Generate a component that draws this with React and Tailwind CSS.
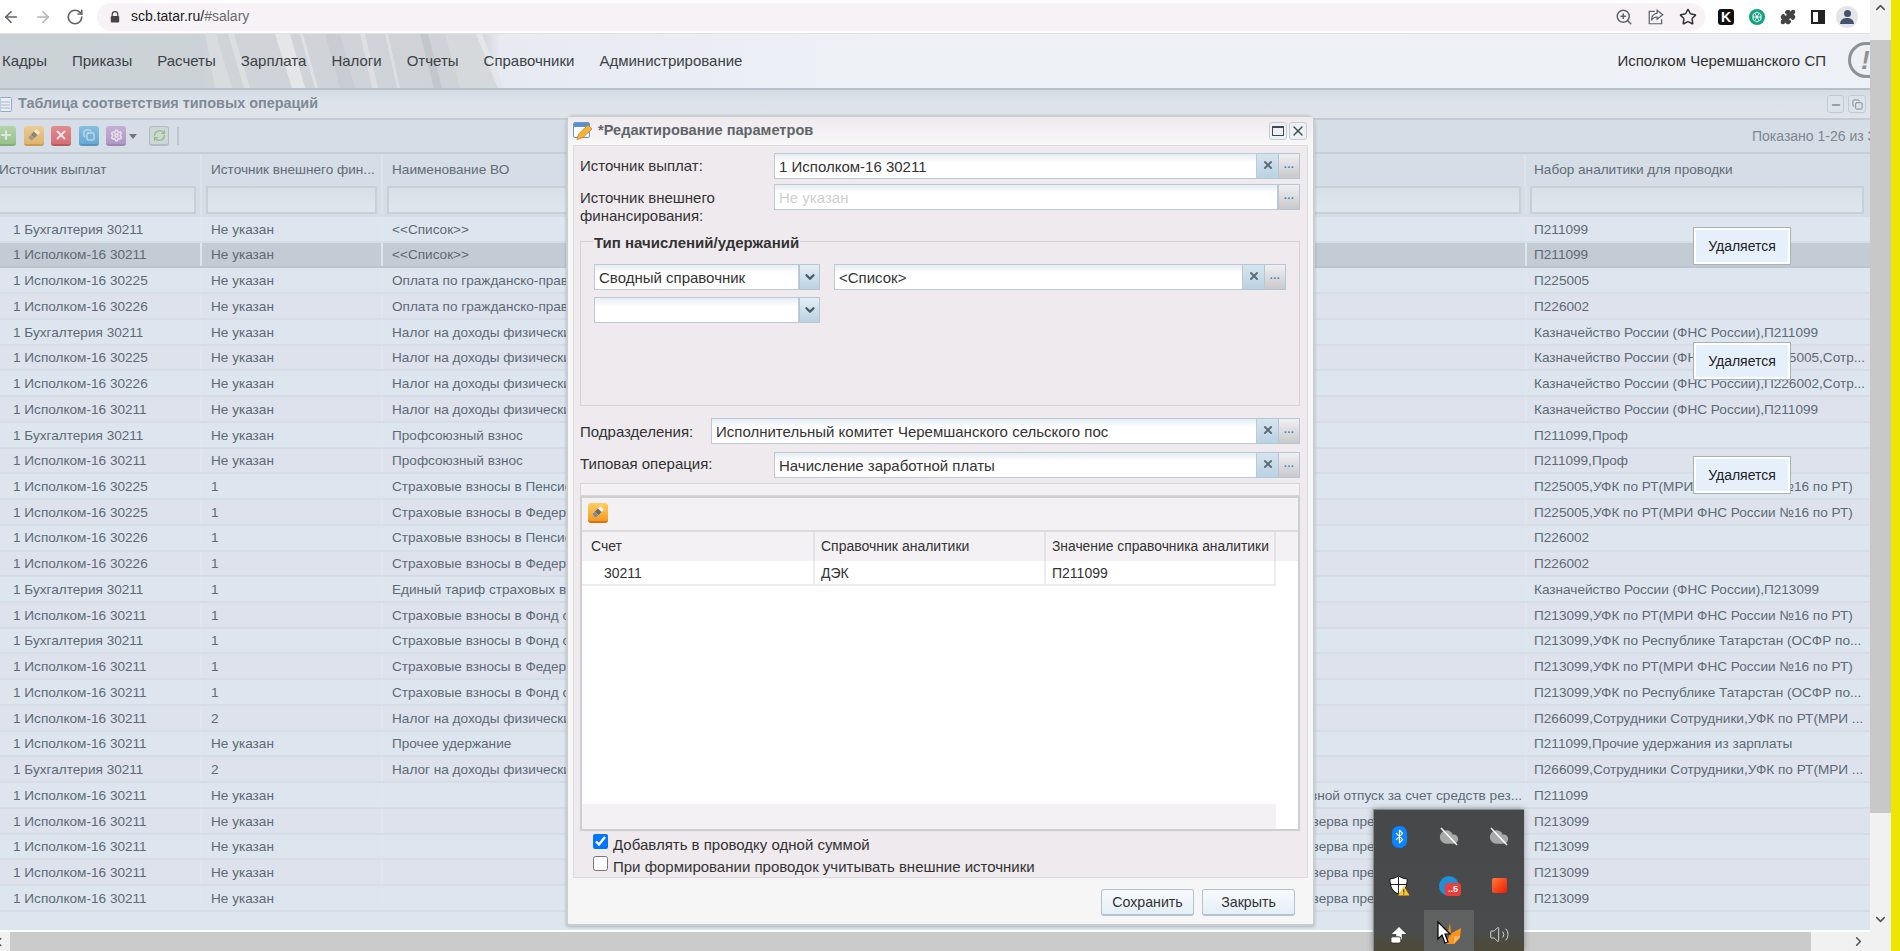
import React from "react";
import { ArrowLeft, ArrowRight, RotateCw, ZoomIn, Star, Puzzle, Plus, X, Copy, Settings, RefreshCw, Bluetooth, Cloud, Volume2, ChevronUp, ChevronDown, ChevronLeft, ChevronRight, Minus } from "lucide-react";

const ROWS = [
  ["1 Бухгалтерия 30211", "Не указан", "<<Список>>", "", "П211099"],
  ["1 Исполком-16 30211", "Не указан", "<<Список>>", "", "П211099"],
  ["1 Исполком-16 30225", "Не указан", "Оплата по гражданско-правовым договорам", "", "П225005"],
  ["1 Исполком-16 30226", "Не указан", "Оплата по гражданско-правовым договорам", "", "П226002"],
  ["1 Бухгалтерия 30211", "Не указан", "Налог на доходы физических лиц", "", "Казначейство России (ФНС России),П211099"],
  ["1 Исполком-16 30225", "Не указан", "Налог на доходы физических лиц", "", "Казначейство России (ФНС России),П225005,Сотр..."],
  ["1 Исполком-16 30226", "Не указан", "Налог на доходы физических лиц", "", "Казначейство России (ФНС России),П226002,Сотр..."],
  ["1 Исполком-16 30211", "Не указан", "Налог на доходы физических лиц", "", "Казначейство России (ФНС России),П211099"],
  ["1 Бухгалтерия 30211", "Не указан", "Профсоюзный взнос", "", "П211099,Проф"],
  ["1 Исполком-16 30211", "Не указан", "Профсоюзный взнос", "", "П211099,Проф"],
  ["1 Исполком-16 30225", "1", "Страховые взносы в Пенсионный фонд", "", "П225005,УФК по РТ(МРИ ФНС России №16 по РТ)"],
  ["1 Исполком-16 30225", "1", "Страховые взносы в Федеральный фонд", "", "П225005,УФК по РТ(МРИ ФНС России №16 по РТ)"],
  ["1 Исполком-16 30226", "1", "Страховые взносы в Пенсионный фонд", "", "П226002"],
  ["1 Исполком-16 30226", "1", "Страховые взносы в Федеральный фонд", "", "П226002"],
  ["1 Бухгалтерия 30211", "1", "Единый тариф страховых взносов", "", "Казначейство России (ФНС России),П213099"],
  ["1 Исполком-16 30211", "1", "Страховые взносы в Фонд социального", "", "П213099,УФК по РТ(МРИ ФНС России №16 по РТ)"],
  ["1 Бухгалтерия 30211", "1", "Страховые взносы в Фонд социального", "", "П213099,УФК по Республике Татарстан (ОСФР по..."],
  ["1 Исполком-16 30211", "1", "Страховые взносы в Федеральный фонд", "", "П213099,УФК по РТ(МРИ ФНС России №16 по РТ)"],
  ["1 Исполком-16 30211", "1", "Страховые взносы в Фонд социального", "", "П213099,УФК по Республике Татарстан (ОСФР по..."],
  ["1 Исполком-16 30211", "2", "Налог на доходы физических лиц", "", "П266099,Сотрудники Сотрудники,УФК по РТ(МРИ ..."],
  ["1 Исполком-16 30211", "Не указан", "Прочее удержание", "", "П211099,Прочие удержания из зарплаты"],
  ["1 Бухгалтерия 30211", "2", "Налог на доходы физических лиц", "", "П266099,Сотрудники Сотрудники,УФК по РТ(МРИ ..."],
  ["1 Исполком-16 30211", "Не указан", "", "Ежегодный основной отпуск за счет средств рез...", "П211099"],
  ["1 Исполком-16 30211", "Не указан", "", "Отпуск за счет резерва предстоящих расходов", "П213099"],
  ["1 Исполком-16 30211", "Не указан", "", "Отпуск за счет резерва предстоящих расходов", "П213099"],
  ["1 Исполком-16 30211", "Не указан", "", "Отпуск за счет резерва предстоящих расходов", "П213099"],
  ["1 Исполком-16 30211", "Не указан", "", "Отпуск за счет резерва предстоящих расходов", "П213099"],
];

function Eraser({ className }) {
  return (
    <svg viewBox="0 0 16 16" className={className}>
      <g transform="rotate(45 8 8)">
        <rect x="5.4" y="2" width="5.2" height="12" rx="1" fill="#fff" fillOpacity="0.85" />
        <rect x="5.4" y="5.5" width="5.2" height="4.5" fill="#6b6b6b" />
        <rect x="5.4" y="10" width="5.2" height="4" rx="1" fill="#8a8a8a" />
      </g>
    </svg>
  );
}

function ToolBtn({ className, children }) {
  return <div className={`w-5 h-5 shrink-0 rounded-[3px] flex items-center justify-center border-b-2 ${className}`}>{children}</div>;
}

function Field({ value, placeholder, clear = true, className = "" }) {
  return (
    <div className={`flex h-[26px] ${className}`}>
      <div className="flex-1 min-w-0 border border-[#bfc9d4] bg-[linear-gradient(#e6edf4,#ffffff_35%)] pl-1 pt-[3px] flex items-center overflow-hidden whitespace-nowrap">
        {placeholder ? <span className="text-[#cfcfcf]">{placeholder}</span> : <span>{value}</span>}
      </div>
      {clear && (
        <div className="w-[21px] shrink-0 border-y border-[#b7c6d4] bg-[linear-gradient(#d6e5ef,#b9d2e2)] flex justify-center pt-[5px]">
          <X size={12} strokeWidth={4} className="text-[#5f6d78]" />
        </div>
      )}
      <Dots />
    </div>
  );
}

function Dots() {
  return (
    <div className="w-[22px] shrink-0 border border-[#b7c6d4] bg-[linear-gradient(#f0f0f2,#c9c9cb)] flex justify-center pt-[3px] text-[#3f83c5] text-[11px] font-bold leading-[14px] tracking-[0.5px]">
      ...
    </div>
  );
}

function Select({ value, className = "" }) {
  return (
    <div className={`flex w-[226px] h-[26px] ${className}`}>
      <div className="flex-1 border border-[#bfc9d4] bg-[linear-gradient(#e6edf4,#ffffff_35%)] pl-1 pt-[3px] flex items-center whitespace-nowrap overflow-hidden">{value}</div>
      <div className="w-[21px] shrink-0 border border-[#b7c6d4] bg-[linear-gradient(#e4eef4,#b9d2e2)] flex justify-center pt-[5px]">
        <ChevronDown size={14} strokeWidth={4} className="text-[#4a5a68]" />
      </div>
    </div>
  );
}

function Button({ children }) {
  return (
    <div className="w-[93px] h-[27px] rounded-[3px] border border-[#b4c3d0] border-b-2 bg-[linear-gradient(#f8fbfd,#e4eff7)] pt-[1px] flex items-center justify-center text-[14.2px] text-[#333]">
      {children}
    </div>
  );
}

function Dialog() {
  return (
    <div className="absolute left-[566px] top-[115px] w-[749px] h-[811px] flex flex-col rounded-t-lg rounded-b-[3px] border-2 border-[#c9ced3] bg-[#f6f6f6] px-[5px] text-[15px] text-[#333] shadow-[0_1px_3px_rgba(0,0,0,0.2)]">
      <div className="h-7 shrink-0 flex items-center bg-[linear-gradient(#eeeaee,#f8f8f8)] -mx-[5px] pl-[5px] pr-[6px]">
        <svg viewBox="0 0 20 18" className="w-5 h-[18px] shrink-0">
          <rect x="0.5" y="0.5" width="16" height="15" rx="1.5" fill="#fff" stroke="#6d97c9" />
          <rect x="1" y="1" width="15" height="4" fill="#5d8fd0" />
          <path d="M4 17.5 L5.5 12 L15 3 L19 7 L10 15.5 Z" fill="#f3b43a" stroke="#b97a18" strokeWidth="0.7" />
        </svg>
        <span className="ml-[5px] font-bold text-[#5f6469] text-[14.6px] whitespace-nowrap">*Редактирование параметров</span>
        <div className="ml-auto flex gap-[2px]">
          <div className="w-[18px] h-[18px] rounded-[3px] border border-[#c5ccd2] bg-[#eef1f3] flex items-center justify-center">
            <div className="w-3 h-[10px] border border-[#3f4a55] border-t-2" />
          </div>
          <div className="w-[18px] h-[18px] rounded-[3px] border border-[#c5ccd2] bg-[#eef1f3] flex items-center justify-center">
            <X size={16} strokeWidth={2} className="text-[#3f4a55]" />
          </div>
        </div>
      </div>

      <div className="h-[733px] shrink-0 bg-[#eeeaee] border border-[#dcdcdc] pl-[6px] pr-[7px] flex flex-col">
        <div className="mt-[7px] flex">
          <div className="w-[194px] shrink-0 h-[25px] leading-[25px]">Источник выплат:</div>
          <Field value="1 Исполком-16 30211" className="flex-1" />
        </div>
        <div className="mt-[5px] flex">
          <div className="w-[194px] shrink-0 leading-[18px] pt-[5px]">Источник внешнего финансирования:</div>
          <Field placeholder="Не указан" clear={false} className="flex-1" />
        </div>
        <div className="relative mt-[16px] h-[165px] shrink-0 border border-[#d6d4d8] pl-[13px] pt-[22px]">
          <span className="absolute left-[12px] -top-[8px] bg-[#eeeaee] px-[1px] leading-[17px] font-bold text-[#333] whitespace-nowrap">Тип начислений/удержаний</span>
          <div className="flex">
            <Select value="Сводный справочник" />
            <Field value="<Список>" className="ml-[14px] w-[452px]" />
          </div>
          <Select value="" className="mt-[7px]" />
        </div>
        <div className="mt-3 flex">
          <div className="w-[131px] shrink-0 h-[26px] leading-[28px]">Подразделения:</div>
          <Field value="Исполнительный комитет Черемшанского сельского пос" className="flex-1" />
        </div>
        <div className="mt-2 flex">
          <div className="w-[194px] shrink-0 h-[26px] leading-[24px]">Типовая операция:</div>
          <Field value="Начисление заработной платы" className="flex-1" />
        </div>
        <div className="mt-[5px] h-[13px] shrink-0 border border-[#d8d8da] bg-[#f4f1f5]" />
        <div className="h-[335px] shrink-0 border-2 border-[#cfcfd1] bg-white flex flex-col text-[14px]">
          <div className="h-[34px] shrink-0 bg-[#f4f1f5] border-b-2 border-[#dcdcde] pl-[6px] pt-[5px]">
            <ToolBtn className="bg-[linear-gradient(#ffcf63,#f59b1f)] border-[#d9730f]">
              <Eraser className="w-4 h-4" />
            </ToolBtn>
          </div>
          <div className="flex h-[29px] shrink-0 items-center bg-[#f4f1f5]">
            <div className="w-[232px] h-full flex items-center pl-2 border-r-2 border-[#e4e2e6] ml-[1px]">Счет</div>
            <div className="w-[231px] h-full flex items-center pl-[6px] border-r-2 border-[#e4e2e6]">Справочник аналитики</div>
            <div className="w-[230px] h-full flex items-center pl-[6px] border-r-2 border-[#e4e2e6] whitespace-nowrap text-[13.85px]">Значение справочника аналитики</div>
          </div>
          <div className="flex h-[25px] shrink-0 w-[694px] border-b-2 border-r-2 border-[#ececee] items-center">
            <div className="w-[232px] h-full flex items-center pl-[21px] pt-[2px] border-r-2 border-[#ececee] ml-[1px]">30211</div>
            <div className="w-[231px] h-full flex items-center pl-[6px] pt-[2px] border-r-2 border-[#ececee]">ДЭК</div>
            <div className="flex-1 h-full flex items-center pl-[6px] pt-[2px]">П211099</div>
          </div>
          <div className="flex-1" />
          <div className="w-[694px] h-[25px] shrink-0 bg-[#f4f1f5]" />
        </div>
        <div className="flex items-start pl-[13px] mt-[3px] h-[23px]">
          <input type="checkbox" defaultChecked className="w-[15px] h-[15px] accent-[#0075ff] m-0" />
          <span className="ml-[5px] leading-[20px] mt-[1px]">Добавлять в проводку одной суммой</span>
        </div>
        <div className="flex items-start pl-[13px] h-[21px]">
          <input type="checkbox" className="w-[15px] h-[15px] m-0" />
          <span className="ml-[5px] leading-[20px] mt-[1px]">При формировании проводок учитывать внешние источники</span>
        </div>
      </div>

      <div className="flex justify-end gap-[8px] pr-[13px] pt-[11px]">
        <Button>Сохранить</Button>
        <Button>Закрыть</Button>
      </div>
    </div>
  );
}

function Tip({ className }) {
  return (
    <div className={`absolute left-[1693px] w-[98px] h-[38px] border border-[#a9b1b8] bg-[#e6f0fb] outline-2 -outline-offset-3 outline-white flex items-center justify-center text-[14px] text-[#222] ${className}`}>
      Удаляется
    </div>
  );
}

function CloudOff() {
  return (
    <div className="relative w-5 h-5 flex items-center justify-center">
      <Cloud size={20} className="text-[#a9a9a9] fill-[#a9a9a9]" />
      <svg viewBox="0 0 20 20" className="absolute inset-0 w-5 h-5">
        <path d="M2 1 L18 18" stroke="#fff" strokeWidth="1.5" />
      </svg>
    </div>
  );
}

function Tray() {
  return (
    <div className="absolute left-[1373px] top-[809px] w-[151px] h-[142px] border-t border-l border-[#8a8a8a] bg-[linear-gradient(#464849,#4a4b4c_85%,#4d4a38)] shadow-[0_0_6px_rgba(0,0,0,0.35)] grid grid-cols-3 grid-rows-[51px_49px_1fr]">
      <div className="flex items-center justify-center pt-[2px]">
        <div className="w-[15px] h-[22px] rounded-[7px] bg-[#0a84ff] flex items-center justify-center">
          <Bluetooth size={15} strokeWidth={2} className="text-white" />
        </div>
      </div>
      <div className="flex items-center justify-center pt-[2px]"><CloudOff /></div>
      <div className="flex items-center justify-center pt-[2px]"><CloudOff /></div>

      <div className="flex items-center justify-center">
        <svg viewBox="0 0 22 22" className="w-[21px] h-[21px]">
          <path d="M10 1 C7 3 4 4 1 4 C1 12 3 17 10 20 C17 17 19 12 19 4 C16 4 13 3 10 1 Z" fill="#fff" stroke="#111" strokeWidth="1" />
          <path d="M10 1.5 V19.5 M1.5 10 H18.5" stroke="#111" strokeWidth="1" />
          <path d="M15.5 11.5 L21.5 21.5 H9.5 Z" fill="#fdc42b" />
          <path d="M15.5 15 V18.5 M15.5 19.5 V20.5" stroke="#222" strokeWidth="1" />
        </svg>
      </div>
      <div className="flex items-center justify-center">
        <div className="relative w-5 h-5 rounded-full bg-[#1d90d6]">
          <span className="absolute left-[6px] top-[7px] w-[16px] h-[13px] rounded-[3px] bg-[#ee3b3b] text-white text-[9px] leading-[13px] text-center font-bold">..5</span>
        </div>
      </div>
      <div className="flex items-center justify-center">
        <div className="w-[15px] h-[15px] rounded-[2px] bg-[linear-gradient(135deg,#ff7a3a,#f01a00)]" />
      </div>

      <div className="flex items-center justify-center pt-[8px]">
        <svg viewBox="0 0 20 20" className="w-[18px] h-[18px]">
          <path d="M10 1 L18 9 H13 V15 H7 V9 H2 Z" fill="#fff" />
          <rect x="1" y="12" width="11" height="7" rx="2" fill="#fff" stroke="#333" strokeWidth="1" />
        </svg>
      </div>
      <div className="bg-[#5f6060] flex items-center justify-center pt-[4px]">
        <svg viewBox="0 0 26 26" className="w-[26px] h-[26px]">
          <path d="M14 3 L15 13 L12 12 Z" fill="#f7941d" />
          <path d="M25 8 L24 18 L18 24 L10 24 L14 14 Z" fill="#f7941d" />
          <path d="M18 16 L24 16 L18 24 Z" fill="#fbb45c" />
          <path d="M2 2 L2 19 L6 15 L9 23 L12 22 L9 14 L14 14 Z" fill="#fff" stroke="#000" strokeWidth="1.2" />
        </svg>
      </div>
      <div className="flex items-center justify-center pt-[8px]">
        <Volume2 size={21} strokeWidth={1} className="text-[#e8e8e8]" />
      </div>
    </div>
  );
}

function Chrome() {
  return (
    <div className="h-[34px] shrink-0 bg-white flex items-center border-b border-[#dfe1e5] text-[#5f6368]">
      <div className="w-[97px] shrink-0 flex items-center pl-[2px] gap-[14px]">
        <ArrowLeft size={18} strokeWidth={2.2} />
        <ArrowRight size={18} strokeWidth={2.2} className="text-[#b4b6b9]" />
        <RotateCw size={18} strokeWidth={2.2} />
      </div>
      <div className="w-[1608px] h-7 rounded-full bg-[#f6f2f6] flex items-center pl-[13px] pr-[8px]">
        <svg viewBox="0 0 10 12" className="w-[10px] h-[12px] shrink-0">
          <path d="M2.2 5 V3.4 a2.8 2.8 0 0 1 5.6 0 V5" fill="none" stroke="#444" strokeWidth="1.2" />
          <rect x="0.8" y="5" width="8.4" height="6.5" rx="1" fill="#444" />
        </svg>
        <span className="ml-[11px] text-[14px] text-[#222] whitespace-nowrap">scb.tatar.ru/<span className="text-[#6b6b6b]">#salary</span></span>
        <div className="ml-auto flex items-center gap-[14px]">
          <ZoomIn size={18} />
          <svg viewBox="0 0 16 16" className="w-[18px] h-[18px]" fill="none" stroke="currentColor" strokeWidth="1.1">
            <path d="M7 3 H2 V14 H13 V10" />
            <path d="M9 2 L14 6 L9 10 V8 C6.5 8 5 9 4 11 C4 7.5 6 5 9 4.5 Z" />
          </svg>
          <Star size={18} strokeWidth={2} className="text-[#333]" />
        </div>
      </div>
      <div className="flex-1 flex items-center pl-[13px] gap-[15px]">
        <div className="w-4 h-4 rounded-[3px] bg-[#111] text-white font-bold text-[14px] leading-4 text-center">K</div>
        <svg viewBox="0 0 16 16" className="w-4 h-[18px]">
          <circle cx="8" cy="8" r="8" fill="#10a37f" />
          <path d="M8 3 L12 5.5 V10.5 L8 13 L4 10.5 V5.5 Z M6 4.5 L10 11.5 M10 4.5 L6 11.5 M4 8 H12" fill="none" stroke="#fff" strokeWidth="1" />
        </svg>
        <Puzzle size={16} className="text-[#444] fill-[#444]" />
        <div className="w-[14px] h-[14px] border-2 border-[#222] bg-[linear-gradient(90deg,#fff_50%,#222_50%)]" />
        <div className="w-[22px] h-[22px] rounded-full bg-[#e3e5e9] overflow-hidden flex flex-col items-center pt-[4px] -ml-[4px]">
          <div className="w-[7px] h-[7px] rounded-full bg-[#44526b]" />
          <div className="w-[14px] h-[6px] mt-[1px] rounded-t-full bg-[#44526b]" />
        </div>
      </div>
    </div>
  );
}

function Nav() {
  const items = ["Кадры", "Приказы", "Расчеты", "Зарплата", "Налоги", "Отчеты", "Справочники", "Администрирование"];
  return (
    <div className="relative h-[56px] shrink-0 overflow-hidden border-b-2 border-[#b5c0cc] bg-[linear-gradient(90deg,#ccd3d7_0,#ccd3d7_200px,#d0d4d8_230px,#cfd2d6_480px,#e7eaf1_500px,#eef1f6_900px,#edf0f5)] flex items-center text-[15px] text-[#3c4247]">
      <svg viewBox="0 0 520 54" className="absolute left-0 top-0 w-[520px] h-[54px]">
        <polygon points="205,0 216,0 232,54 215,54" fill="#d9dcdf" />
        <polygon points="228,0 234,0 250,54 244,54" fill="#dcdfe2" />
        <polygon points="275,0 290,0 305,54 292,54" fill="#e4e6e8" />
        <polygon points="300,0 303,0 318,54 315,54" fill="#dfe1e4" />
        <polygon points="325,0 340,0 355,54 340,54" fill="#c9cdd1" />
        <polygon points="360,0 365,0 378,54 372,54" fill="#dddfe2" />
        <polygon points="385,0 388,0 400,54 397,54" fill="#dde0e3" />
        <polygon points="420,0 428,0 442,54 434,54" fill="#c2c7cb" />
        <polygon points="445,0 476,0 498,54 460,54" fill="#d6d9dc" />
        <polygon points="476,0 482,0 504,54 498,54" fill="#e3e6eb" />
      </svg>
      <div className="relative flex pl-[2px] gap-[25px] whitespace-nowrap">
        {items.map((t) => <span key={t}>{t}</span>)}
      </div>
      <span className="relative ml-auto mr-[44px] whitespace-nowrap text-[#333]">Исполком Черемшанского СП</span>
      <div className="absolute left-[1848px] top-[8px] w-[40px] h-[36px] rounded-full border-[3px] border-[#8d9296] text-[#8d9296] font-bold italic text-[26px] leading-[30px] pl-[10px]">!</div>
    </div>
  );
}

function Grid() {
  return (
    <div className="flex-1 min-h-0 flex flex-col bg-[#dde6ee] text-[13.6px] text-[#5f6a75] overflow-hidden">
      <div className="h-[33px] shrink-0 flex items-center bg-[#d5dde6] text-[#626c76] border-t border-[#c6ced6]">
        <div className="w-[203px] shrink-0 h-full flex items-center border-r-2 border-[#dde3ea] -ml-[1px]">Источник выплат</div>
        <div className="w-[181px] shrink-0 h-full flex items-center pl-[9px] border-r-2 border-[#dde3ea] whitespace-nowrap overflow-hidden">Источник внешнего фин...</div>
        <div className="w-[1143px] shrink-0 h-full flex items-center pl-[9px] border-r-2 border-[#dde3ea]">Наименование ВО</div>
        <div className="flex-1 h-full flex items-center pl-2">Набор аналитики для проводки</div>
      </div>
      <div className="h-[31px] shrink-0 flex bg-[#d5dde6] pb-[3px]">
        <div className="w-[202px] shrink-0 pr-[4px] border-r-2 border-[#dde3ea]"><div className="h-full border-2 border-[#c8cfd6] bg-[linear-gradient(#d8e0e7,#dfe7ee)] -ml-[2px]" /></div>
        <div className="w-[181px] shrink-0 px-1 border-r-2 border-[#dde3ea]"><div className="h-full border-2 border-[#c8cfd6] bg-[linear-gradient(#d8e0e7,#dfe7ee)]" /></div>
        <div className="w-[1144px] shrink-0 px-1 border-r-2 border-[#dde3ea]"><div className="h-full border-2 border-[#c8cfd6] bg-[linear-gradient(#d8e0e7,#dfe7ee)]" /></div>
        <div className="w-[337px] shrink-0 pl-[3px]"><div className="h-full border-2 border-[#c8cfd6] bg-[linear-gradient(#d8e0e7,#dfe7ee)]" /></div>
      </div>
      <div className="h-[695px] shrink-0 flex flex-col">
        {ROWS.map((r, i) => (
          <div
            key={i}
            className={`flex-1 min-h-0 flex items-center border-b-2 ${i === 1 ? "bg-[#c3cbd4] border-[#bcc4cd]" : i % 2 === 0 ? "bg-[#dde6ee] border-[#d5dee7]" : "bg-[#dde2ed] border-[#d5dee7]"}`}
          >
            <div className="w-[202px] shrink-0 h-full flex items-center pl-[13px] pt-[2px] border-r-2 border-[#e0e6ed] whitespace-nowrap">{r[0]}</div>
            <div className="w-[181px] shrink-0 h-full flex items-center pl-[9px] pt-[2px] border-r-2 border-[#e0e6ed]">{r[1]}</div>
            <div className="w-[700px] shrink-0 h-full flex items-center pl-[9px] pt-[2px] whitespace-nowrap overflow-hidden">{r[2]}</div>
            <div className={`w-[444px] shrink-0 h-full flex items-center pt-[2px] border-r-2 border-[#e0e6ed] whitespace-nowrap overflow-hidden ${i === 22 ? "justify-end pr-[3px]" : "pl-[119px]"}`}>{r[3]}</div>
            <div className="flex-1 min-w-0 h-full flex items-center pl-[7px] pt-[2px] whitespace-nowrap overflow-hidden">{r[4]}</div>
          </div>
        ))}
      </div>
      <div className="flex-1" />
    </div>
  );
}

export default function App() {
  return (
    <div className="relative flex w-[1900px] h-[951px] overflow-hidden bg-white font-['Liberation_Sans',sans-serif]">
      <div className="w-[1870px] shrink-0 flex flex-col">
        <Chrome />
        <Nav />
        <div className="relative h-[30px] shrink-0 bg-[linear-gradient(#d3dbe3,#dce2e9_40%,#e0e4e9)] border-b-2 border-[#c3ccd4] flex items-center">
          <svg viewBox="0 0 12 15" className="w-3 h-[15px] shrink-0">
            <rect x="0" y="0.5" width="11.5" height="14" rx="1" fill="#e9eef4" stroke="#8fa9c7" />
            <path d="M1 5 H10 M1 8 H10 M1 11 H10" stroke="#a9b6c4" />
          </svg>
          <span className="ml-[6px] font-bold text-[14.4px] text-[#7f8a96] whitespace-nowrap">Таблица соответствия типовых операций</span>
          <div className="ml-auto mr-1 flex gap-[4px] text-[#7d8995]">
            <div className="w-[17px] h-[18px] rounded-[3px] border border-[#c3ccd4] bg-[#dde3ea] flex items-end justify-center pb-[1px]"><Minus size={12} strokeWidth={3} /></div>
            <div className="w-[18px] h-[18px] rounded-[3px] border border-[#c3ccd4] bg-[#dde3ea] flex items-center justify-center"><Copy size={11} strokeWidth={2} /></div>
          </div>
        </div>
        <div className="h-[33px] shrink-0 bg-[#d5dde6] flex items-center border-b border-[#c6ced6] text-[14px] text-[#7d8790]">
          <ToolBtn className="-ml-[4px] bg-[linear-gradient(#b4d4ab,#98c08e)] border-[#84ac7b]"><Plus size={14} strokeWidth={3.5} className="text-[#dfe8df]" /></ToolBtn>
          <ToolBtn className="ml-[8px] bg-[linear-gradient(#ebcc92,#dfb56c)] border-[#c99a54]"><Eraser className="w-4 h-4 opacity-70" /></ToolBtn>
          <ToolBtn className="ml-[7px] bg-[linear-gradient(#e28b90,#d46f75)] border-[#b95a60]"><X size={14} strokeWidth={3.5} className="text-[#ece2e3]" /></ToolBtn>
          <ToolBtn className="ml-[8px] bg-[linear-gradient(#84bee0,#66a9d2)] border-[#5b96ba]"><Copy size={12} strokeWidth={2} className="text-[#dbe7ee]" /></ToolBtn>
          <ToolBtn className="ml-[7px] bg-[linear-gradient(#c4afd5,#b097c5)] border-[#9e87b2]"><Settings size={13} strokeWidth={3} className="text-[#e6e0eb]" /></ToolBtn>
          <div className="ml-[3px] w-0 h-0 border-x-[4px] border-x-transparent border-t-[5px] border-t-[#6f757b]" />
          <ToolBtn className="ml-[12px] bg-[#cfd6da] border-[#b4bcc1] border border-b-2"><RefreshCw size={13} strokeWidth={2.5} className="text-[#8fc27d]" /></ToolBtn>
          <div className="ml-[8px] w-[2px] h-[18px] bg-[#bcc7cf]" />
          <span className="ml-auto whitespace-nowrap w-[118px] overflow-hidden">Показано 1-26 из 33</span>
        </div>
        <Grid />
        <div className="h-[21px] shrink-0 flex items-stretch bg-[#f1f1f1] border-t-2 border-white">
          <div className="w-[10px] shrink-0 flex items-center text-[#555] overflow-hidden"><ChevronLeft size={14} strokeWidth={2.5} className="-ml-2" /></div>
          <div className="w-[1801px] bg-[#cbcbcb]" />
          <div className="flex-1 flex items-center justify-end pr-1 text-[#555]"><ChevronRight size={15} strokeWidth={2.5} /></div>
        </div>
      </div>
      <div className="w-[21px] shrink-0 flex flex-col bg-[#f1f1f1] text-[#555]">
        <div className="h-10 flex justify-center"><ChevronUp size={15} strokeWidth={2.5} /></div>
        <div className="h-[773px] bg-[#c8c8c8]" />
        <div className="h-[117px] flex justify-center items-end pb-[3px]"><ChevronDown size={15} strokeWidth={2.5} /></div>
        <div className="flex-1" />
      </div>
      <div className="flex-1 bg-[#efe600]" />
      <Tip className="top-[227px]" />
      <Tip className="top-[342px]" />
      <Tip className="top-[456px]" />
      <Dialog />
      <Tray />
    </div>
  );
}
